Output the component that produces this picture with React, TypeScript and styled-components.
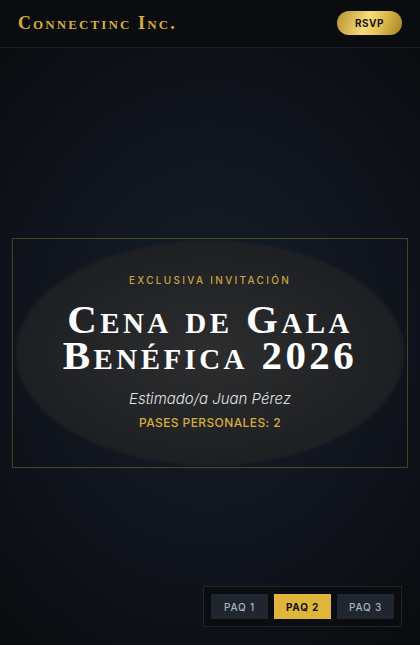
import React, { useState } from "react";
import styled, { createGlobalStyle } from "styled-components";

const Global = createGlobalStyle`
  html, body { margin: 0; padding: 0; background: #0b0c10; }
  body { font-family: Inter, "Open Sans", sans-serif; color: #fff; }
  * { box-sizing: border-box; }
`;

const Page = styled.div`
  min-height: 645px;
  display: flex;
  flex-direction: column;
  background: radial-gradient(ellipse 75% 60% at 50% 52%, #18202b 0%, #111620 45%, #0b0c10 100%);
`;

const Header = styled.header`
  height: 48px;
  display: flex;
  align-items: center;
  justify-content: space-between;
  padding: 0 18px;
  background: #0b0c10;
  border-bottom: 1px solid rgba(255, 255, 255, 0.08);
`;

const Logo = styled.div`
  font-family: "Liberation Serif", "DejaVu Serif", serif;
  font-variant: small-caps;
  font-weight: 700;
  font-size: 18px;
  letter-spacing: 2.1px;
  color: #d4af37;
  margin-top: -1px;
`;

const Rsvp = styled.button`
  width: 65px;
  height: 24px;
  margin-top: -1px;
  border: none;
  border-radius: 12px;
  background: linear-gradient(110deg, #b8912a 0%, #f5dc7a 45%, #e9c95a 60%, #a8821f 100%);
  color: #1a1406;
  font-family: Inter, sans-serif;
  font-weight: 700;
  font-size: 10px;
  letter-spacing: 0.5px;
`;

const Main = styled.main`
  flex: 1;
  display: flex;
  align-items: center;
  padding: 12px 12px 0;
`;

const Card = styled.section`
  width: 100%;
  height: 230px;
  border: 1px solid rgba(212, 175, 55, 0.3);
  background: radial-gradient(ellipse 50% 50% at 50% 50%, #2d2d2e 0%, #262729 45%, #1d1f23 97%, rgba(28, 30, 34, 0) 100%);
  display: flex;
  flex-direction: column;
  align-items: center;
  text-align: center;
  padding-top: 35px;
`;

const Eyebrow = styled.div`
  font-family: Inter, sans-serif;
  font-size: 10px;
  font-weight: 500;
  letter-spacing: 2.3px;
  color: #c9a43a;
`;

const Title = styled.h1`
  margin: 15px 0 0;
  font-family: "Liberation Serif", "DejaVu Serif", serif;
  font-variant: small-caps;
  font-weight: 700;
  font-size: 41px;
  line-height: 36px;
  letter-spacing: 3.4px;
  color: #fff;
`;

const Greeting = styled.div`
  margin-top: 16px;
  font-family: Inter, sans-serif;
  font-style: italic;
  font-size: 15px;
  font-weight: 300;
  color: #e2e2e2;
`;

const Passes = styled.div`
  margin-top: 7px;
  font-family: Inter, sans-serif;
  font-size: 12px;
  font-weight: 500;
  letter-spacing: 0.4px;
  color: #d4af37;
`;

const Picker = styled.nav`
  position: fixed;
  right: 18px;
  bottom: 18px;
  display: flex;
  gap: 6px;
  padding: 7px;
  background: #0b0c10;
  border: 1px solid rgba(255, 255, 255, 0.1);
`;

const Pkg = styled.button<{ $active: boolean }>`
  width: 57px;
  height: 25px;
  border: none;
  background: ${(p) => (p.$active ? "#dfb53a" : "#1f2630")};
  color: ${(p) => (p.$active ? "#111" : "#aeb3ba")};
  font-family: Inter, sans-serif;
  font-size: 10px;
  font-weight: ${(p) => (p.$active ? 700 : 500)};
  letter-spacing: 0.8px;
  padding: 0;
`;

export default function App() {
  const [active, setActive] = useState(2);
  return (
    <>
      <Global />
      <Page>
        <Header>
          <Logo>Connectinc Inc.</Logo>
          <Rsvp>RSVP</Rsvp>
        </Header>
        <Main>
          <Card>
            <Eyebrow>EXCLUSIVA INVITACIÓN</Eyebrow>
            <Title>
              Cena de Gala
              <br />
              Benéfica 2026
            </Title>
            <Greeting>Estimado/a Juan Pérez</Greeting>
            <Passes>PASES PERSONALES: 2</Passes>
          </Card>
        </Main>
        <Picker>
          {[1, 2, 3].map((n) => (
            <Pkg key={n} $active={active === n} onClick={() => setActive(n)}>
              PAQ {n}
            </Pkg>
          ))}
        </Picker>
      </Page>
    </>
  );
}
